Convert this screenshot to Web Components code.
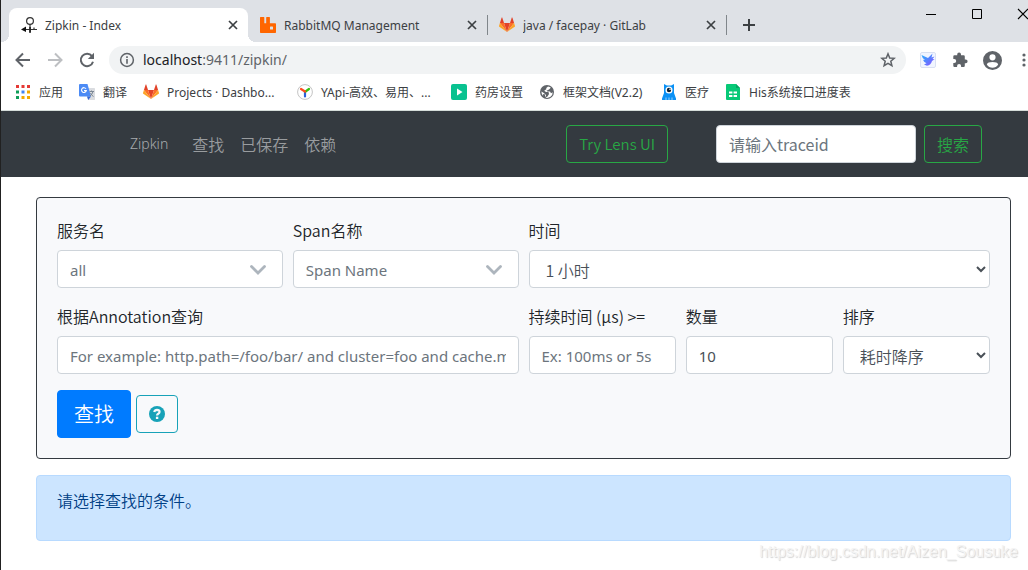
<!DOCTYPE html>
<html lang="zh-CN">
<head>
<meta charset="utf-8">
<title>Zipkin - Index</title>
<style>
  html { height: 100%; overflow: hidden; }
  body {
    margin: 0;
    min-height: 100%;
    box-sizing: border-box;
    border-left: 1px solid #212121;
    background: #fff;
    overflow: hidden;
    font: 350 16px/24px "Noto Sans CJK SC", "Noto Sans", sans-serif;
    color: #212529;
  }
</style>
</head>
<body>
<app-window></app-window>

<script>
const ICONS = {
  zipkin: '<g fill="none" stroke="#333" stroke-width="1.2"><circle cx="9" cy="4" r="3.4"/><path d="M9 7.400V16M2 12.500H16M13 10.500V13"/></g><path d="M0 12.500L5 9.500V15Z" fill="#111"/><path d="M8.200 10H9.900V15.500H8.200Z" fill="#222"/>',
  rabbit: '<path fill="#f60" d="M.6 0H3.800Q4.300 0 4.300.5V6.200H6.200V.5Q6.200 0 6.700 0H9.400Q9.900 0 9.900.5V6.200H15.300Q16 6.200 16 6.900V15.300Q16 16 15.300 16H.7Q0 16 0 15.300V.6Q0 0 .6 0Z"/><rect x="10" y="9.500" width="3" height="3" rx=".6" fill="#dee1e6"/>',
  gitlab: '<path fill="#e24329" d="M8 15L11 6.100H5Z"/><path fill="#fc6d26" d="M8 15L5 6.100H.9Z"/><path fill="#fca326" d="M.9 6.100L0 9Q-.1 9.500.3 9.800L8 15Z"/><path fill="#e24329" d="M.9 6.100H5L3.300.8Q3-.1 2.600.8Z"/><path fill="#fc6d26" d="M8 15L11 6.100H15.100Z"/><path fill="#fca326" d="M15.100 6.100L16 9Q16.100 9.500 15.700 9.800L8 15Z"/><path fill="#e24329" d="M15.100 6.100H11L12.700.8Q13-.1 13.400.8Z"/>',
  apps: '<path fill="#e53935" d="M1 1H4V4H1ZM6.500 1H9.500V4H6.500ZM12 1H15V4H12Z"/><path fill="#0f9d58" d="M1 6.500H4V9.500H1ZM1 12H4V15H1Z"/><path fill="#4285f4" d="M6.500 6.500H9.500V9.500H6.500Z"/><path fill="#f4a900" d="M12 6.500H15V9.500H12ZM6.500 12H9.500V15H6.500ZM12 12H15V15H12Z"/>',
  translate: '<path fill="#dadce0" d="M6 4H15.300Q16 4 16 4.700V15.300Q16 16 15.300 16H9Z"/><path fill="#4c8bf5" d="M1 0H8.500L12 12.500H1Q0 12.500 0 11.500V1Q0 0 1 0Z"/><path fill="#3367d6" d="M8 12.500H12L9.200 16Z"/><path fill="none" stroke="#fff" stroke-width="1.100" d="M7 4.800A2.400 2.400 0 1 0 7.300 6.600H5"/><path fill="none" stroke="#7b8794" stroke-width="1" d="M10.500 7.500H15M12.500 6.500V7.500M14 7.500Q13 11 11 12M11.500 9Q12.500 11.500 14.500 12.500"/>',
  yapi: '<circle cx="8" cy="8" r="7.400" fill="#fff" stroke="#c4c4c4"/><g fill="none" stroke-width="2.200" stroke-linecap="round"><path stroke="#2b5fd9" d="M8 8.500V12.500"/><path stroke="#35c20f" d="M8.500 7.500L12 5"/><path stroke="#ff4a1c" d="M8 7.500L4 5"/></g>',
  play: '<rect width="16" height="16" rx="2" fill="#08c290"/><path fill="#fff" d="M6 4.500L11.500 8L6 11.500Z"/>',
  globe: '<circle cx="8" cy="8" r="7" fill="#5f6368"/><path fill="#fff" d="M9 2.500L7.300 4V5.300L5.200 6.800L7 8H9.500L10 10L8.500 12.500L7 13.300V11L4.500 8.800L2.400 7.500Q2.300 10.500 4.500 12.600Q3 9.500 5.500 10L7 13.800Q11 14.400 13.200 11L13.700 8.200L12 9.200L11 7.500H8.500L7.500 6.700L10 5.600L11.500 4V3.200Z"/>',
  monster: '<path fill="#0b91f5" d="M3 0L5.800 1.600H10.200L13 0V9L15 14.500V16H1V14.500L3 9Z"/><path fill="none" stroke="#fff" stroke-width=".6" d="M5 16V13.500M8 16V13.500M11 16V13.500"/><circle cx="8" cy="6" r="3.500" fill="#fff"/><circle cx="8" cy="6" r="2.200" fill="#123"/><circle cx="9" cy="5.300" r=".8" fill="#fff"/>',
  sheet: '<path fill="#07c977" d="M2 0H11L15 4V16H2Q1 16 1 15V1Q1 0 2 0Z"/><path fill="#05a562" d="M11 0V4H15Z"/><path fill="#fff" d="M4 7.500H7.400V9.500H4ZM8.600 7.500H12V9.500H8.600ZM4 11H7.400V13H4ZM8.600 11H12V13H8.600Z"/>',
  close: '<path fill="none" stroke="#3c4043" stroke-width="1.700" d="M4 4L12 12M12 4L4 12"/>',
  plus: '<path fill="none" stroke="#3c4043" stroke-width="2" d="M8 2V14M2 8H14"/>',
  min: '<path fill="none" stroke="#000" d="M3 8.500H13"/>',
  max: '<path fill="none" stroke="#000" d="M3.500 3.500H12.500V12.500H3.500Z"/>',
  shut: '<path fill="none" stroke="#000" stroke-width="1.100" d="M3 3L13 13M13 3L3 13"/>',
  back: '<path fill="none" stroke="#5f6368" stroke-width="2" d="M15 8H2M8 1.500L1.500 8L8 14.500"/>',
  forward: '<path fill="none" stroke="#bdbfc2" stroke-width="2" d="M1 8H14M8 1.500L14.500 8L8 14.500"/>',
  reload: '<path fill="none" stroke="#5f6368" stroke-width="2" d="M13 4.200A6.200 6.200 0 1 0 14 9.700"/><path fill="#5f6368" d="M15 .8V7H8.800Z"/>',
  info: '<circle cx="8" cy="8" r="6.400" fill="none" stroke="#5f6368" stroke-width="1.500"/><path fill="#5f6368" d="M7.200 4.300H8.800V5.900H7.200ZM7.200 7.100H8.800V11.800H7.200Z"/>',
  star: '<path fill="none" stroke="#5f6368" stroke-width="1.500" d="M8 1.800L9.700 6L14.200 6.300L10.800 9.200L11.900 13.700L8 11.300L4.100 13.700L5.200 9.200L1.800 6.300L6.300 6Z"/>',
  bird: '<defs><linearGradient id="b" x1="0" y1="0" x2="1" y2="1"><stop offset="0" stop-color="#25b5ff"/><stop offset="1" stop-color="#8b4dff"/></linearGradient></defs><rect x=".5" y=".5" width="15" height="15" rx="1.500" fill="#f1f5ff" stroke="#d9e0f2"/><path fill="url(#b)" d="M1.500 3L8 6L12.500 1.500L11.500 5.500L14.500 4.500L12.500 7L14.500 7.200L12 9Q11 13 7 13.800L4 12.500L6.500 11.300Q3.500 10 3 7.800L5 8Q2 6 1.500 3Z"/>',
  puzzle: '<path fill="#5f6368" d="M13.700 7.400H12.800V4.500Q12.800 3.300 11.600 3.300H9V2.400A1.900 1.900 0 0 0 5.200 2.400V3.300H2.500Q1.300 3.300 1.300 4.500V7.100H2.200A2 2 0 0 1 2.200 11.100H1.300V13.800Q1.300 15 2.500 15H5.100V14.100A2 2 0 0 1 9.100 14.100V15H11.600Q12.800 15 12.800 13.800V11.200H13.700A1.900 1.900 0 0 0 13.700 7.400Z"/>',
  avatar: '<path fill="#5f6368" fill-rule="evenodd" d="M8 0A8 8 0 1 1 8 16A8 8 0 0 1 8 0ZM8 2.700A2.600 2.600 0 1 0 8 7.900A2.600 2.600 0 0 0 8 2.700ZM3.200 11.300Q5 14 8 14T12.800 11.300Q12 9.300 8 9.300T3.200 11.300Z"/>',
  dots: '<g fill="#5f6368"><circle cx="8" cy="3" r="1.600"/><circle cx="8" cy="8" r="1.600"/><circle cx="8" cy="13" r="1.600"/></g>',
  chevron: '<path fill="none" stroke="#adb5bd" stroke-width="2.800" stroke-linecap="round" stroke-linejoin="miter" d="M1.500 5.500L8 12L14.500 5.500"/>',
  help: '<circle cx="8" cy="8" r="8" fill="#17a2b8"/><path fill="none" stroke="#f8f9fa" stroke-width="2.300" d="M5.200 6Q5.800 3.900 8 3.900Q10.600 4 10.500 6Q10.400 7.100 9.200 7.800Q8.100 8.400 8.100 9.600"/><path fill="#f8f9fa" d="M6.900 10.700H9.300V13H6.900Z"/>'
};

const define = (name, render) => customElements.define(name, class extends HTMLElement {
  connectedCallback() {
    if (this.shadowRoot) return;
    const t = document.createElement('template');
    t.innerHTML = render(this);
    this.attachShadow({ mode: 'open' }).append(t.content.cloneNode(true));
  }
});
const attr = (el, name) => el.getAttribute(name) || '';

const CONTROL = `
  *, *::before { box-sizing: border-box; }
  input, select {
    display: block; width: 100%; height: 38px; margin: 0; padding: 6px 12px;
    border: 1px solid #ced4da; border-radius: 4px; background-color: #fff;
    color: #495057; font-family: "Noto Sans", "Noto Sans CJK SC", sans-serif; font-size: 15px; line-height: 24px; outline: none;
  }
  input::placeholder { color: #6c757d; opacity: 1; }`;
const BUTTON = `
  button, .btn {
    box-sizing: border-box; display: block; height: 38px; margin: 0; padding: 6px 12px;
    border: 1px solid currentColor; border-radius: 4px; background: transparent;
    font: inherit; line-height: 24px; white-space: nowrap; text-decoration: none; cursor: pointer;
  }`;

define('ui-icon', el => `
  <style>
    :host { display: block; flex: none; width: 16px; height: 16px; }
    svg { display: block; width: 100%; height: 100%; }
  </style>
  <svg viewBox="0 0 16 16" aria-hidden="true">${ICONS[attr(el, 'name')]}</svg>`);

define('icon-button', el => `
  <style>
    :host { display: block; flex: none; width: 32px; height: 28px; }
    button { display: grid; place-items: center; width: 100%; height: 100%; margin: 0; padding: 0; border: 0; background: none; }
  </style>
  <button type="button" aria-label="${attr(el, 'label')}"><slot></slot></button>`);

define('browser-tab', el => `
  <style>
    :host {
      box-sizing: border-box; display: flex; align-items: center; gap: 8px; flex: 0 1 239px; min-width: 0;
      height: 34px; padding: 0 7px 0 12px; border-radius: 8px 8px 0 0; position: relative;
      color: #3c4043; font-size: 12px; line-height: 16px;
    }
    :host([active]) { background: #fff; }
    :host([active])::before, :host([active])::after {
      content: ""; position: absolute; bottom: 0; width: 8px; height: 8px;
    }
    :host([active])::before { right: 100%; background: radial-gradient(circle at 0 0, transparent 8px, #fff 8px); }
    :host([active])::after { left: 100%; background: radial-gradient(circle at 100% 0, transparent 8px, #fff 8px); }
    i { position: absolute; right: -1px; top: 7px; width: 1px; height: 20px; background: #80868b; }
    :host([active]) i { display: none; }
    span { flex: 1; min-width: 0; padding-top: 2px; overflow: hidden; white-space: nowrap; font-family: "Noto Sans", sans-serif; font-weight: 400; }
    icon-button { width: 16px; height: 16px; }
  </style>
  <ui-icon name="${attr(el, 'icon')}"></ui-icon>
  <span><slot></slot></span>
  <icon-button label="关闭"><ui-icon name="close"></ui-icon></icon-button><i></i>`);

define('tab-strip', () => `
  <style>
    :host { display: flex; justify-content: space-between; height: 42px; background: #dee1e6; }
    .tabs { display: flex; flex: 1; min-width: 0; align-items: flex-end; padding-left: 8px; }
    .new { width: 46px; height: 34px; }
    .win { display: flex; flex: none; margin-right: -18px; }
    .win icon-button { width: 46px; }
  </style>
  <div class="tabs">
    <browser-tab icon="zipkin" active>Zipkin - Index</browser-tab>
    <browser-tab icon="rabbit">RabbitMQ Management</browser-tab>
    <browser-tab icon="gitlab">java / facepay · GitLab</browser-tab>
    <icon-button class="new" label="新标签页"><ui-icon name="plus"></ui-icon></icon-button>
  </div>
  <div class="win">
    <icon-button label="最小化"><ui-icon name="min"></ui-icon></icon-button>
    <icon-button label="最大化"><ui-icon name="max"></ui-icon></icon-button>
    <icon-button label="关闭窗口"><ui-icon name="shut"></ui-icon></icon-button>
  </div>`);

define('address-bar', () => `
  <style>
    :host { display: flex; align-items: center; height: 36px; padding-left: 6px; margin-right: -12px; background: #fff; }
    .box {
      display: flex; align-items: center; flex: 1; min-width: 0; gap: 8px; height: 28px; margin: 0 6px; padding: 0 2px 0 10px;
      border-radius: 14px; background: #f1f3f4; box-sizing: border-box;
    }
    .url { flex: 1; min-width: 0; outline: none; color: #5f6368; font: 14px/20px "Noto Sans", sans-serif; }
    b { font-weight: 400; color: #202124; }
    .avatar { width: 19px; height: 19px; }
  </style>
  <icon-button label="后退"><ui-icon name="back"></ui-icon></icon-button>
  <icon-button label="前进"><ui-icon name="forward"></ui-icon></icon-button>
  <icon-button label="重新加载"><ui-icon name="reload"></ui-icon></icon-button>
  <div class="box">
    <ui-icon name="info"></ui-icon>
    <div class="url" role="textbox" contenteditable="true" spellcheck="false" aria-label="网址"><b>localhost</b>:9411/zipkin/</div>
    <icon-button label="收藏"><ui-icon name="star"></ui-icon></icon-button>
  </div>
  <icon-button label="扩展"><ui-icon name="bird"></ui-icon></icon-button>
  <icon-button label="扩展程序"><ui-icon name="puzzle"></ui-icon></icon-button>
  <icon-button label="用户"><ui-icon class="avatar" name="avatar"></ui-icon></icon-button>
  <icon-button label="菜单"><ui-icon name="dots"></ui-icon></icon-button>`);

define('bookmark-link', el => `
  <style>
    :host { display: block; flex: none; }
    a { display: flex; align-items: center; gap: 8px; color: #3c4043; font: 12px/16px "Noto Sans", "Noto Sans CJK SC", sans-serif; text-decoration: none; white-space: nowrap; }
    span { padding-top: 2px; }
  </style>
  <a href="#"><ui-icon name="${attr(el, 'icon')}"></ui-icon><span><slot></slot></span></a>`);

define('bookmarks-bar', () => `
  <style>
    :host { display: flex; align-items: center; gap: 16px; height: 28px; padding: 0 0 4px 14px; border-bottom: 1px solid #d5dcd9; background: #fff; overflow: hidden; }
    .wide { width: 138px; }
    .doc { width: 106px; }
  </style>
  <bookmark-link icon="apps">应用</bookmark-link>
  <bookmark-link icon="translate">翻译</bookmark-link>
  <bookmark-link class="wide" icon="gitlab">Projects · Dashbo...</bookmark-link>
  <bookmark-link class="wide" icon="yapi">YApi-高效、易用、...</bookmark-link>
  <bookmark-link icon="play">药房设置</bookmark-link>
  <bookmark-link class="doc" icon="globe">框架文档(V2.2)</bookmark-link>
  <bookmark-link icon="monster">医疗</bookmark-link>
  <bookmark-link icon="sheet">His系统接口进度表</bookmark-link>`);

define('site-nav', () => `
  <style>
    ${CONTROL}${BUTTON}
    :host { display: flex; align-items: center; height: 66px; padding: 0 46px 0 129px; background: #343a40; box-sizing: border-box; }
    nav { display: flex; flex: 1; align-items: center; gap: 16px; }
    nav a { color: #999c9f; text-decoration: none; white-space: nowrap; }
    .brand { margin-right: 8px; font-family: "Noto Sans", sans-serif; font-weight: 300; font-size: 14px; color: #a8abae; }
    form { display: flex; gap: 8px; margin: 0 0 0 48px; }
    input { width: 200px; font-family: inherit; font-size: 16px; }
    .btn, button { color: #28a745; }
    .lens { font-size: 15px; }
  </style>
  <nav>
    <a class="brand" href="#">Zipkin</a>
    <a href="#">查找</a><a href="#">已保存</a><a href="#">依赖</a>
  </nav>
  <a class="btn lens" href="#">Try Lens UI</a>
  <form>
    <input type="text" placeholder="请输入traceid" aria-label="traceid">
    <button type="button">搜索</button>
  </form>`);

const FIELD = `
  ${CONTROL}
  :host { display: block; min-width: 0; }
  label { display: block; margin-bottom: 8px; white-space: nowrap; }`;

define('text-field', el => `
  <style>${FIELD} input { padding: 7px 12px 5px; }</style>
  <label for="c">${attr(el, 'label')}</label>
  <input id="c" type="text" value="${attr(el, 'value')}" placeholder="${attr(el, 'placeholder')}">`);

define('select-field', el => `
  <style>${FIELD} select { font-size: 16px; font-family: inherit; font-weight: inherit; }</style>
  <label for="c">${attr(el, 'label')}</label>
  <select id="c"><option>${attr(el, 'value')}</option></select>`);

define('picker-field', el => `
  <style>
    ${FIELD}
    .wrap { position: relative; }
    select { appearance: none; padding: 7px 40px 5px 12px; color: #6c757d; }
    ui-icon { position: absolute; right: 17px; top: 11px; pointer-events: none; }
  </style>
  <label for="c">${attr(el, 'label')}</label>
  <div class="wrap">
    <select id="c"><option>${attr(el, 'value')}</option></select>
    <ui-icon name="chevron"></ui-icon>
  </div>`);

define('search-panel', () => `
  <style>
    ${BUTTON}
    :host { display: block; padding: 20px; border: 1px solid #343a40; border-radius: 4px; background: #f8f9fb; }
    form { display: grid; grid-template-columns: repeat(12, minmax(0, 1fr)); gap: 16px 10px; margin: 0; }
    .c2 { grid-column: span 2; }
    .c3 { grid-column: span 3; }
    .c6 { grid-column: span 6; }
    .actions { grid-column: 1 / -1; display: flex; align-items: center; gap: 5px; }
    .go { height: 48px; padding: 8px 16px; border-color: #007bff; background: #007bff; color: #fff; font-size: 20px; line-height: 30px; }
    .help { padding: 6px 12px; color: #17a2b8; }
  </style>
  <form>
    <picker-field class="c3" label="服务名" value="all"></picker-field>
    <picker-field class="c3" label="Span名称" value="Span Name"></picker-field>
    <select-field class="c6" label="时间" value="1 小时"></select-field>
    <text-field class="c6" label="根据Annotation查询" placeholder="For example: http.path=/foo/bar/ and cluster=foo and cache.miss"></text-field>
    <text-field class="c2" label="持续时间 (μs) &gt;=" placeholder="Ex: 100ms or 5s"></text-field>
    <text-field class="c2" label="数量" value="10"></text-field>
    <select-field class="c2" label="排序" value="耗时降序"></select-field>
    <div class="actions">
      <button class="go" type="button">查找</button>
      <button class="help" type="button" aria-label="帮助"><ui-icon name="help"></ui-icon></button>
    </div>
  </form>`);

define('notice-box', () => `
  <style>
    :host { display: block; padding: 12px 20px; border: 1px solid #b8daff; border-radius: 4px; background: #cce5ff; color: #004085; }
    p { margin: 0 0 16px; }
  </style>
  <p><slot></slot></p>`);

define('app-window', () => `
  <style>
    :host { display: block; }
    main { display: flex; flex-direction: column; gap: 16px; padding: 20px 17px 20px 35px; }
    .mark {
      position: absolute; right: 10px; bottom: 6px; color: #f4f4f4; text-shadow: 1px 1px 1px #d4d4d4;
      font: 16px/24px "Liberation Sans", sans-serif;
    }
  </style>
  <tab-strip></tab-strip>
  <address-bar></address-bar>
  <bookmarks-bar></bookmarks-bar>
  <site-nav></site-nav>
  <main>
    <search-panel></search-panel>
    <notice-box>请选择查找的条件。</notice-box>
  </main>
  <div class="mark">https://blog.csdn.net/Aizen_Sousuke</div>`);
</script>
</body>
</html>
